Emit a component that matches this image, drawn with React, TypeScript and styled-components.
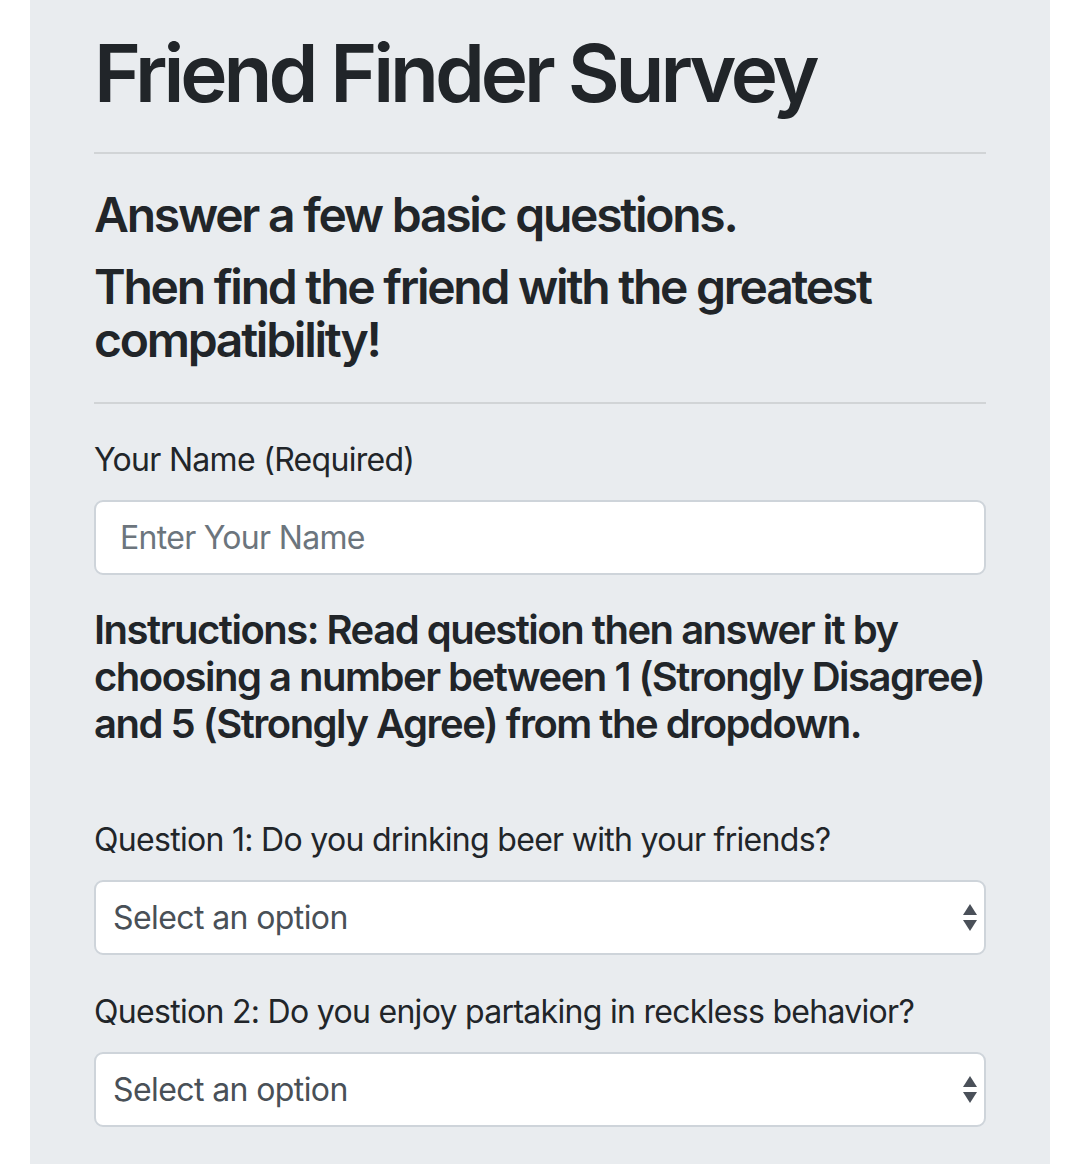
import React from "react";
import styled, { createGlobalStyle } from "styled-components";

const GlobalStyle = createGlobalStyle`
  html, body {
    margin: 0;
    padding: 0;
    background: #ffffff;
  }
  body {
    font-family: Inter, "Noto Sans", "Liberation Sans", sans-serif;
    color: #212529;
  }
  * { box-sizing: border-box; }
`;

const Page = styled.div`
  padding-left: 30px;
  width: 1050px;
`;

const Jumbotron = styled.main`
  background: #e9ecef;
  padding: 25px 64px 64px;
  display: flex;
  flex-direction: column;
`;

const Title = styled.h1`
  margin: 0;
  font-size: 80px;
  line-height: 96px;
  font-weight: 600;
  letter-spacing: -4.1px;
  color: #212529;
`;

const Rule = styled.hr<{ $top: number }>`
  margin: ${(p) => p.$top}px 0 0;
  border: 0;
  border-top: 2px solid rgba(0, 0, 0, 0.1);
  height: 0;
`;

const Lead = styled.h4<{ $top: number }>`
  margin: ${(p) => p.$top}px 0 0;
  font-size: 48px;
  line-height: 53px;
  font-weight: 600;
  letter-spacing: -2.25px;
  color: #212529;
`;

const Instructions = styled.h5`
  margin: 31px 0 0;
  font-size: 40px;
  line-height: 47px;
  font-weight: 600;
  letter-spacing: -1.5px;
  color: #212529;
`;

const Field = styled.div<{ $top: number }>`
  margin-top: ${(p) => p.$top}px;
  display: flex;
  flex-direction: column;
  gap: 16px;
`;

const Label = styled.label`
  font-size: 32px;
  line-height: 48px;
  font-weight: 400;
  letter-spacing: -0.7px;
  color: #212529;
`;

const TextInput = styled.input`
  display: block;
  width: 100%;
  height: 75px;
  padding: 0 24px;
  font-family: inherit;
  font-size: 32px;
  line-height: 48px;
  letter-spacing: -0.7px;
  color: #495057;
  background: #ffffff;
  border: 2px solid #ced4da;
  border-radius: 9px;
  outline: none;
  &::placeholder {
    color: #6c757d;
    opacity: 1;
  }
`;

const SelectWrap = styled.div`
  position: relative;
  height: 75px;
`;

const Select = styled.select`
  appearance: none;
  -webkit-appearance: none;
  display: block;
  width: 100%;
  height: 75px;
  padding: 0 60px 0 17px;
  font-family: inherit;
  font-size: 32px;
  line-height: 48px;
  letter-spacing: -0.6px;
  color: #495057;
  background: #ffffff;
  border: 2px solid #ced4da;
  border-radius: 9px;
  outline: none;
`;

const Arrows = styled.svg`
  position: absolute;
  right: 9px;
  top: 24px;
  width: 14px;
  height: 27px;
  pointer-events: none;
`;

const questions = [
  "Question 1: Do you drinking beer with your friends?",
  "Question 2: Do you enjoy partaking in reckless behavior?",
];

function ArrowIcon() {
  return (
    <Arrows viewBox="0 0 14 27">
      <polygon points="7,0 14,11 0,11" fill="#4a5059" />
      <polygon points="0,16 14,16 7,27" fill="#4a5059" />
    </Arrows>
  );
}

export default function App() {
  return (
    <>
      <GlobalStyle />
      <Page>
        <Jumbotron>
          <Title>Friend Finder Survey</Title>
          <Rule $top={31} />
          <Lead $top={34}>Answer a few basic questions.</Lead>
          <Lead $top={19}>Then find the friend with the greatest compatibility!</Lead>
          <Rule $top={36} />
          <Field $top={32}>
            <Label htmlFor="name">Your Name (Required)</Label>
            <TextInput id="name" placeholder="Enter Your Name" />
          </Field>
          <Instructions>
            Instructions: Read question then answer it by choosing a number between 1 (Strongly
            Disagree) and 5 (Strongly Agree) from the dropdown.
          </Instructions>
          {questions.map((q, i) => (
            <Field key={q} $top={i === 0 ? 69 : 33}>
              <Label htmlFor={`q${i + 1}`}>{q}</Label>
              <SelectWrap>
                <Select id={`q${i + 1}`} defaultValue="">
                  <option value="">Select an option</option>
                  <option value="1">1 (Strongly Disagree)</option>
                  <option value="2">2</option>
                  <option value="3">3</option>
                  <option value="4">4</option>
                  <option value="5">5 (Strongly Agree)</option>
                </Select>
                <ArrowIcon />
              </SelectWrap>
            </Field>
          ))}
        </Jumbotron>
      </Page>
    </>
  );
}
